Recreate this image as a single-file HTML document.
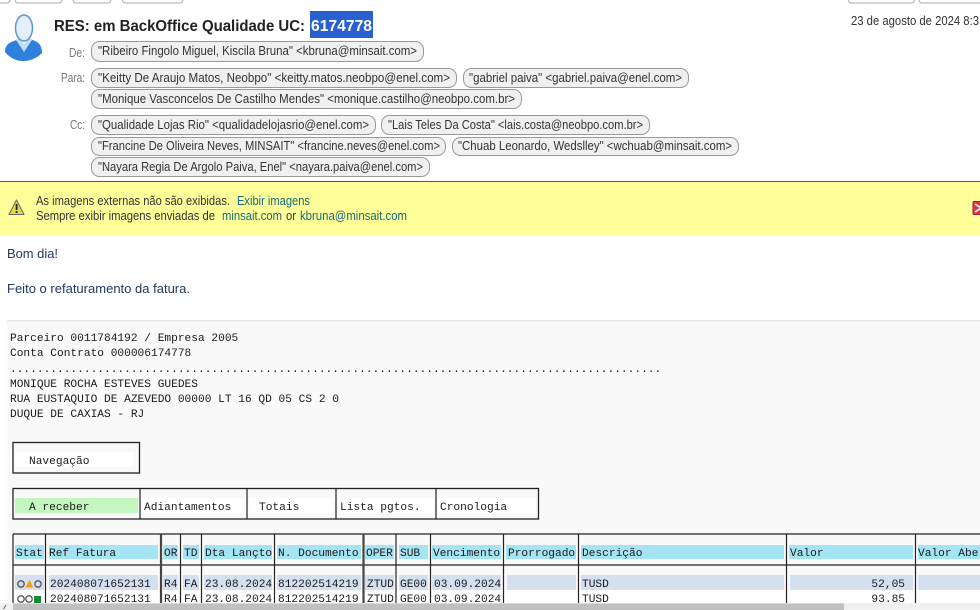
<!DOCTYPE html>
<html><head><meta charset="utf-8"><style>
html,body{margin:0;padding:0;width:980px;height:610px;overflow:hidden;background:#fff}
svg{display:block}
text{white-space:pre}
.s{font-family:"Liberation Sans",sans-serif;font-size:12.5px;fill:#333}
.l{fill:#777}
.a{fill:#16697a}
.b{fill:#1f3864;font-size:12.5px}
.m{font-family:"Liberation Mono",monospace;font-size:11.2px;fill:#1a1a1a}
.chip{fill:#f0f0f0;stroke:#999;stroke-width:1}
.btn{fill:#fff;stroke:#aaa;stroke-width:1}
.h{fill:#a4e4f4}.r{fill:#d4dff0}
</style></head><body>
<svg width="980" height="610" viewBox="0 0 980 610" xmlns="http://www.w3.org/2000/svg">
<rect width="980" height="610" fill="#fff"/>
<rect class="btn" x="-6" y="-8" width="16" height="11" rx="3"/>
<rect class="btn" x="15" y="-8" width="47" height="11" rx="3"/>
<rect class="btn" x="73" y="-8" width="38" height="11" rx="3"/>
<rect class="btn" x="122.500" y="-8" width="60.500" height="11" rx="3"/>
<rect class="btn" x="848.500" y="-8" width="66" height="11" rx="3"/>
<rect class="btn" x="919" y="-8" width="70" height="11" rx="3"/>

<!-- avatar -->
<path d="M5 52C5 46 8 43 14 41L19 38.500L29 38.500L35 41C40 43 42 47 42 53C36 59 29 61 23.500 61C16 61 10 58 5 52Z" fill="#2f80dc"/>
<path d="M16 40L24 52L32 40L28 38L24 45L19 38Z" fill="#bfe0fa"/>
<path d="M24 45L19 38L29 38Z" fill="#f3f8fd"/>
<ellipse cx="24" cy="28" rx="8.500" ry="13" fill="#e4edf8" stroke="#5d95d5" stroke-width="1.500"/>

<text class="s" x="54" y="31" style="font-size:16px;font-weight:bold;fill:#222" textLength="251" lengthAdjust="spacingAndGlyphs">RES: em BackOffice Qualidade UC:</text>
<rect x="310" y="11" width="63" height="27" fill="#2a5fd0"/>
<text class="s" x="311" y="31" style="font-size:16px;font-weight:bold;fill:#fff" textLength="61" lengthAdjust="spacingAndGlyphs">6174778</text>
<text class="s" x="851" y="25" textLength="128" lengthAdjust="spacingAndGlyphs">23 de agosto de 2024 8:3</text>

<text class="s l" x="69" y="57" textLength="16" lengthAdjust="spacingAndGlyphs">De:</text>
<text class="s l" x="61" y="82" textLength="24" lengthAdjust="spacingAndGlyphs">Para:</text>
<text class="s l" x="70" y="129" textLength="15" lengthAdjust="spacingAndGlyphs">Cc:</text>

<rect class="chip" x="91.500" y="41.500" width="332" height="20" rx="8"/>
<text class="s" x="98" y="55" textLength="319" lengthAdjust="spacingAndGlyphs">"Ribeiro Fingolo Miguel, Kiscila Bruna" &lt;kbruna@minsait.com&gt;</text>
<rect class="chip" x="91.500" y="68.500" width="365" height="19" rx="8"/>
<text class="s" x="98" y="82" textLength="352" lengthAdjust="spacingAndGlyphs">"Keitty De Araujo Matos, Neobpo" &lt;keitty.matos.neobpo@enel.com&gt;</text>
<rect class="chip" x="463.500" y="68.500" width="225" height="19" rx="8"/>
<text class="s" x="469" y="82" textLength="213" lengthAdjust="spacingAndGlyphs">"gabriel paiva" &lt;gabriel.paiva@enel.com&gt;</text>
<rect class="chip" x="91.500" y="89.500" width="430" height="19" rx="8"/>
<text class="s" x="98" y="103" textLength="417" lengthAdjust="spacingAndGlyphs">"Monique Vasconcelos De Castilho Mendes" &lt;monique.castilho@neobpo.com.br&gt;</text>
<rect class="chip" x="91.500" y="115.500" width="284" height="19" rx="8"/>
<text class="s" x="98" y="129" textLength="271" lengthAdjust="spacingAndGlyphs">"Qualidade Lojas Rio" &lt;qualidadelojasrio@enel.com&gt;</text>
<rect class="chip" x="381.500" y="115.500" width="268" height="19" rx="8"/>
<text class="s" x="388" y="129" textLength="255" lengthAdjust="spacingAndGlyphs">"Lais Teles Da Costa" &lt;lais.costa@neobpo.com.br&gt;</text>
<rect class="chip" x="91.500" y="137.500" width="354" height="18" rx="8"/>
<text class="s" x="98" y="150" textLength="342" lengthAdjust="spacingAndGlyphs">"Francine De Oliveira Neves, MINSAIT" &lt;francine.neves@enel.com&gt;</text>
<rect class="chip" x="452.500" y="137.500" width="286" height="18" rx="8"/>
<text class="s" x="458" y="150" textLength="274" lengthAdjust="spacingAndGlyphs">"Chuab Leonardo, Wedslley" &lt;wchuab@minsait.com&gt;</text>
<rect class="chip" x="91.500" y="157.500" width="338" height="19" rx="8"/>
<text class="s" x="98" y="171" textLength="325" lengthAdjust="spacingAndGlyphs">"Nayara Regia De Argolo Paiva, Enel" &lt;nayara.paiva@enel.com&gt;</text>

<!-- notice -->
<rect x="0" y="181" width="980" height="1" fill="#4a5a6a"/>
<rect x="0" y="182" width="980" height="53" fill="#ffff99"/>
<path d="M16.500 200L24 214.500L9 214.500Z" fill="#e8d84a" stroke="#666" stroke-width="1" stroke-linejoin="round"/>
<rect x="15.700" y="204" width="1.800" height="6" fill="#222"/>
<rect x="15.700" y="211" width="1.800" height="2" fill="#222"/>
<text class="s" x="36" y="205" textLength="194" lengthAdjust="spacingAndGlyphs">As imagens externas não são exibidas.</text>
<text class="s a" x="237" y="205" textLength="73" lengthAdjust="spacingAndGlyphs">Exibir imagens</text>
<text class="s" x="36" y="220" textLength="179" lengthAdjust="spacingAndGlyphs">Sempre exibir imagens enviadas de</text>
<text class="s a" x="222" y="220" textLength="60" lengthAdjust="spacingAndGlyphs">minsait.com</text>
<text class="s" x="286" y="220" textLength="10" lengthAdjust="spacingAndGlyphs">or</text>
<text class="s a" x="300" y="220" textLength="107" lengthAdjust="spacingAndGlyphs">kbruna@minsait.com</text>
<rect x="973" y="201.500" width="9" height="13" rx="1" fill="#d9364a" stroke="#a02030"/>
<path d="M975 204L981 208L975 212" stroke="#fff" stroke-width="1.500" fill="none"/>

<text class="s b" x="7" y="258" textLength="51" lengthAdjust="spacingAndGlyphs">Bom dia!</text>
<text class="s b" x="7" y="293" textLength="183" lengthAdjust="spacingAndGlyphs">Feito o refaturamento da fatura.</text>

<!-- SAP content -->
<rect x="7" y="320" width="973" height="290" fill="#f9f9f9"/>
<rect x="7" y="320" width="973" height="1.500" fill="#e8e8e8"/>
<text class="m" x="10" y="341">Parceiro 0011784192 / Empresa 2005</text>
<text class="m" x="10" y="356">Conta Contrato 000006174778</text>
<text class="m" x="10" y="372">.................................................................................................</text>
<text class="m" x="10" y="387">MONIQUE ROCHA ESTEVES GUEDES</text>
<text class="m" x="10" y="402">RUA EUSTAQUIO DE AZEVEDO 00000 LT 16 QD 05 CS 2 0</text>
<text class="m" x="10" y="417">DUQUE DE CAXIAS - RJ</text>

<rect x="13" y="442.500" width="126.500" height="30.500" fill="#f9f9f9" stroke="#222" stroke-width="1.300"/>
<rect x="15" y="452" width="118" height="15" fill="#fff"/>
<text class="m" x="29" y="464">Navegação</text>

<rect x="13" y="488.500" width="525.500" height="30.500" fill="#f9f9f9" stroke="#222" stroke-width="1.300"/>
<rect x="15" y="498" width="123" height="15" fill="#c4f7c0"/>
<rect x="142" y="498" width="103" height="15" fill="#fff"/>
<rect x="249" y="498" width="85" height="15" fill="#fff"/>
<rect x="338" y="498" width="96" height="15" fill="#fff"/>
<rect x="438" y="498" width="98" height="15" fill="#fff"/>
<path d="M140 488V519M247 488V519M336 488V519M436 488V519" stroke="#222" stroke-width="1.200"/>
<text class="m" x="29" y="510">A receber</text>
<text class="m" x="144" y="510">Adiantamentos</text>
<text class="m" x="259" y="510">Totais</text>
<text class="m" x="340" y="510">Lista pgtos.</text>
<text class="m" x="440" y="510">Cronologia</text>

<!-- table header bands -->
<rect class="h" x="15" y="545" width="29" height="14"/>
<rect class="h" x="49" y="545" width="109" height="14"/>
<rect class="h" x="163" y="545" width="15" height="14"/>
<rect class="h" x="183" y="545" width="16" height="14"/>
<rect class="h" x="204" y="545" width="68" height="14"/>
<rect class="h" x="277" y="545" width="84" height="14"/>
<rect class="h" x="365" y="545" width="29" height="14"/>
<rect class="h" x="399" y="545" width="29" height="14"/>
<rect class="h" x="432" y="545" width="69" height="14"/>
<rect class="h" x="506" y="545" width="70" height="14"/>
<rect class="h" x="581" y="545" width="203" height="14"/>
<rect class="h" x="789" y="545" width="124" height="14"/>
<rect class="h" x="918" y="545" width="62" height="14"/>

<!-- row bands -->
<rect x="15" y="590" width="965" height="14" fill="#fff"/>
<rect class="r" x="15" y="575" width="29" height="15"/>
<rect class="r" x="49" y="575" width="109" height="15"/>
<rect class="r" x="163" y="575" width="15" height="15"/>
<rect class="r" x="183" y="575" width="16" height="15"/>
<rect class="r" x="204" y="575" width="68" height="15"/>
<rect class="r" x="277" y="575" width="84" height="15"/>
<rect class="r" x="365" y="575" width="29" height="15"/>
<rect class="r" x="399" y="575" width="29" height="15"/>
<rect class="r" x="432" y="575" width="69" height="15"/>
<rect class="r" x="507" y="575" width="69" height="15"/>
<rect class="r" x="581" y="575" width="203" height="15"/>
<rect class="r" x="790" y="575" width="123" height="15"/>
<rect class="r" x="918" y="575" width="62" height="15"/>

<!-- table lines -->
<path d="M13 534H980M13 565H980" stroke="#222" stroke-width="1.200"/>
<path d="M13 534V604M45.500 534V604M180.500 534V604M201.500 534V604M274.500 534V604M396 534V604M430.500 534V604M503.500 534V604M578.500 534V604M786.500 534V604M915.500 534V604" stroke="#222" stroke-width="1.200"/>
<path d="M161 534V604M363.500 534V604" stroke="#444" stroke-width="2.200"/>

<text class="m" x="16" y="556">Stat</text>
<text class="m" x="49" y="556">Ref Fatura</text>
<text class="m" x="164" y="556">OR</text>
<text class="m" x="184" y="556">TD</text>
<text class="m" x="205" y="556">Dta Lançto</text>
<text class="m" x="278" y="556">N. Documento</text>
<text class="m" x="366" y="556">OPER</text>
<text class="m" x="400" y="556">SUB</text>
<text class="m" x="433" y="556">Vencimento</text>
<text class="m" x="508" y="556">Prorrogado</text>
<text class="m" x="582" y="556">Descrição</text>
<text class="m" x="790" y="556">Valor</text>
<text class="m" x="918" y="556">Valor Aberto</text>

<circle cx="21" cy="584" r="3.200" fill="none" stroke="#555" stroke-width="1.300"/>
<path d="M29.500 580L33.500 587.500H25.500Z" fill="#f0a010"/>
<circle cx="38" cy="584" r="3.200" fill="none" stroke="#555" stroke-width="1.300"/>
<text class="m" x="50" y="587">202408071652131</text>
<text class="m" x="164" y="587">R4</text>
<text class="m" x="184" y="587">FA</text>
<text class="m" x="205" y="587">23.08.2024</text>
<text class="m" x="278" y="587">812202514219</text>
<text class="m" x="367" y="587">ZTUD</text>
<text class="m" x="400" y="587">GE00</text>
<text class="m" x="434" y="587">03.09.2024</text>
<text class="m" x="582" y="587">TUSD</text>
<text class="m" x="905" y="587" text-anchor="end">52,05</text>

<circle cx="21" cy="599" r="3.200" fill="none" stroke="#555" stroke-width="1.300"/>
<circle cx="29" cy="599" r="3.200" fill="none" stroke="#555" stroke-width="1.300"/>
<rect x="34" y="596" width="7" height="7" fill="#1a8a3a"/>
<text class="m" x="50" y="602">202408071652131</text>
<text class="m" x="164" y="602">R4</text>
<text class="m" x="184" y="602">FA</text>
<text class="m" x="205" y="602">23.08.2024</text>
<text class="m" x="278" y="602">812202514219</text>
<text class="m" x="367" y="602">ZTUD</text>
<text class="m" x="400" y="602">GE00</text>
<text class="m" x="434" y="602">03.09.2024</text>
<text class="m" x="582" y="602">TUSD</text>
<text class="m" x="905" y="602" text-anchor="end">93.85</text>

<!-- scrollbar -->
<rect x="0" y="603" width="980" height="7" fill="#f0f0f0"/>
<rect x="13" y="603.500" width="831" height="6.500" fill="#c0c0c0"/>
<path d="M6 605L3.500 609" stroke="#666" stroke-width="1" fill="none"/>
</svg>
</body></html>
